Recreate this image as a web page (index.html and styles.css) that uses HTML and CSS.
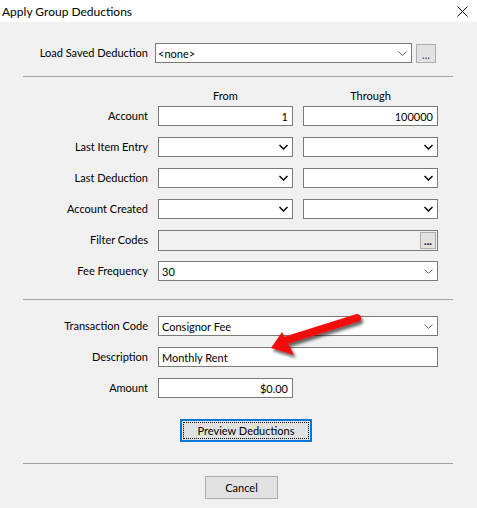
FILE: index.html
```html
<!DOCTYPE html>
<html lang="en">
<head>
    <meta charset="UTF-8">
    <title>Apply Group Deductions</title>
    <link rel="stylesheet" href="styles.css">
</head>
<body>
<div class="window">

    <!-- Title bar -->
    <div class="titlebar">
        <span>Apply Group Deductions</span>
        <svg class="close" width="11" height="11" viewBox="0 0 11 11">
            <path d="M0.5 0.5 L10.5 10.5 M10.5 0.5 L0.5 10.5" stroke="#000" stroke-width="1" fill="none"/>
        </svg>
    </div>

    <div class="dialog">

        <!-- Saved deduction picker -->
        <div class="load-row">
            <label>Load Saved Deduction</label>
            <div class="field combo-wide">
                <span>&lt;none&gt;</span>
                <svg class="chev light" width="9" height="5" viewBox="0 0 9 5"><path d="M0.5 0.5 L4.5 4.5 L8.5 0.5" stroke="#666" fill="none"/></svg>
            </div>
            <button class="btn dots">...</button>
        </div>

        <div class="sep first"></div>

        <!-- Range filters -->
        <div class="grid head">
            <span></span>
            <span class="col-title">From</span>
            <span class="col-title">Through</span>
        </div>

        <div class="grid">
            <label>Account</label>
            <div class="field num"><span>1</span></div>
            <div class="field num"><span>100000</span></div>

            <label>Last Item Entry</label>
            <div class="field"><span></span><svg class="chev" width="9" height="6" viewBox="0 0 9 6"><path d="M0.5 1 L4.5 5 L8.5 1" stroke="#000" stroke-width="1.4" fill="none"/></svg></div>
            <div class="field"><span></span><svg class="chev" width="9" height="6" viewBox="0 0 9 6"><path d="M0.5 1 L4.5 5 L8.5 1" stroke="#000" stroke-width="1.4" fill="none"/></svg></div>

            <label>Last Deduction</label>
            <div class="field"><span></span><svg class="chev" width="9" height="6" viewBox="0 0 9 6"><path d="M0.5 1 L4.5 5 L8.5 1" stroke="#000" stroke-width="1.4" fill="none"/></svg></div>
            <div class="field"><span></span><svg class="chev" width="9" height="6" viewBox="0 0 9 6"><path d="M0.5 1 L4.5 5 L8.5 1" stroke="#000" stroke-width="1.4" fill="none"/></svg></div>

            <label>Account Created</label>
            <div class="field"><span></span><svg class="chev" width="9" height="6" viewBox="0 0 9 6"><path d="M0.5 1 L4.5 5 L8.5 1" stroke="#000" stroke-width="1.4" fill="none"/></svg></div>
            <div class="field"><span></span><svg class="chev" width="9" height="6" viewBox="0 0 9 6"><path d="M0.5 1 L4.5 5 L8.5 1" stroke="#000" stroke-width="1.4" fill="none"/></svg></div>

            <label>Filter Codes</label>
            <div class="field span2 disabled">
                <span></span>
                <button class="btn mini">...</button>
            </div>

            <label>Fee Frequency</label>
            <div class="field span2">
                <span>30</span>
                <svg class="chev light" width="9" height="5" viewBox="0 0 9 5"><path d="M0.5 0.5 L4.5 4.5 L8.5 0.5" stroke="#666" fill="none"/></svg>
            </div>
        </div>

        <div class="sep second"></div>

        <!-- Deduction details -->
        <div class="grid details">
            <label>Transaction Code</label>
            <div class="field span2">
                <span>Consignor Fee</span>
                <svg class="chev light" width="9" height="5" viewBox="0 0 9 5"><path d="M0.5 0.5 L4.5 4.5 L8.5 0.5" stroke="#666" fill="none"/></svg>
            </div>

            <label>Description</label>
            <div class="field span2"><span>Monthly Rent</span></div>

            <label>Amount</label>
            <div class="field num"><span>$0.00</span></div>
        </div>

        <div class="actions">
            <button class="btn preview"><span>Preview Deductions</span></button>
        </div>

        <div class="sep third"></div>

        <div class="footer">
            <button class="btn cancel">Cancel</button>
        </div>
    </div>

    <!-- callout arrow pointing at the description -->
    <svg class="callout" width="477" height="508" viewBox="0 0 477 508">
        <defs>
            <filter id="shade" x="-20%" y="-40%" width="140%" height="180%">
                <feDropShadow dx="2" dy="3" stdDeviation="1.6" flood-color="#000" flood-opacity="0.6"/>
            </filter>
        </defs>
        <g filter="url(#shade)">
            <line x1="287" y1="340" x2="357" y2="318" stroke="#f20d0d" stroke-width="8" stroke-linecap="round"/>
            <polygon points="271,348 282,332 294,355" fill="#f20d0d"/>
        </g>
    </svg>
</div>
</body>
</html>
```

FILE: styles.css
```css
body {
    margin: 0;
    font-family: Lato, "Liberation Sans", sans-serif;
    font-size: 11px;
    color: #000;
    background-color: #f0f0f0;
}

.window {
    position: relative;
    width: 477px;
    height: 508px;
    background-color: #f0f0f0;
    overflow: hidden;
}

.titlebar {
    height: 22px;
    background-color: #fff;
    display: flex;
    align-items: center;
    justify-content: space-between;
    padding: 0 9px 0 2px;
    font-size: 12px;
}

.dialog {
    padding: 21px 24px 0 23px;
}

label {
    text-align: right;
    align-self: center;
    line-height: 14px;
    margin-top: -1px;
}

.load-row {
    display: flex;
    align-items: center;
    height: 20px;
}

.load-row label {
    width: 125px;
    margin-right: 7px;
}

.field {
    box-sizing: border-box;
    height: 20px;
    border: 1px solid #7a7a7a;
    background-color: #fff;
    display: flex;
    align-items: center;
    justify-content: space-between;
    padding: 0 4px 0 3px;
    white-space: nowrap;
}

.field.num {
    justify-content: flex-end;
}

.field.span2 {
    grid-column: span 2;
}

.field.disabled {
    height: 21px;
    background-color: #f0f0f0;
    padding-right: 1px;
}

.combo-wide {
    width: 257px;
    padding-left: 2px;
}

.chev {
    flex-shrink: 0;
}

.btn {
    box-sizing: border-box;
    font-family: inherit;
    font-size: 11px;
    color: #000;
    background-color: #e1e1e1;
    border: 1px solid #adadad;
    padding: 0;
    margin: 0;
}

.dots {
    width: 20px;
    height: 19px;
    margin-left: 4px;
    margin-top: 1px;
    line-height: 19px;
    color: #303080;
}

.mini {
    width: 16px;
    height: 17px;
    font-weight: bold;
    line-height: 10px;
}

.sep {
    height: 1px;
    background-color: #a0a0a0;
}

.sep.first {
    margin-top: 13px;
}

.sep.second {
    margin-top: 18px;
}

.sep.third {
    margin-top: 21px;
}

.grid {
    display: grid;
    grid-template-columns: 125px 135px 135px;
    column-gap: 10px;
    row-gap: 11px;
    grid-auto-rows: 20px;
}

.grid.head {
    grid-auto-rows: 16px;
    margin-top: 11px;
    margin-bottom: 2px;
}

.col-title {
    text-align: center;
    line-height: 16px;
}

.grid.details {
    margin-top: 16px;
}

.actions {
    padding-left: 157px;
    margin-top: 21px;
}

.preview {
    width: 132px;
    height: 23px;
    border: 2px solid #0078d7;
    padding: 1px;
}

.preview span {
    display: block;
    height: 100%;
    box-sizing: border-box;
    border: 1px dotted #000;
    line-height: 15px;
}

.footer {
    padding-left: 182px;
    margin-top: 12px;
}

.cancel {
    width: 73px;
    height: 23px;
}

.callout {
    position: absolute;
    top: 0;
    left: 0;
    pointer-events: none;
}
```
